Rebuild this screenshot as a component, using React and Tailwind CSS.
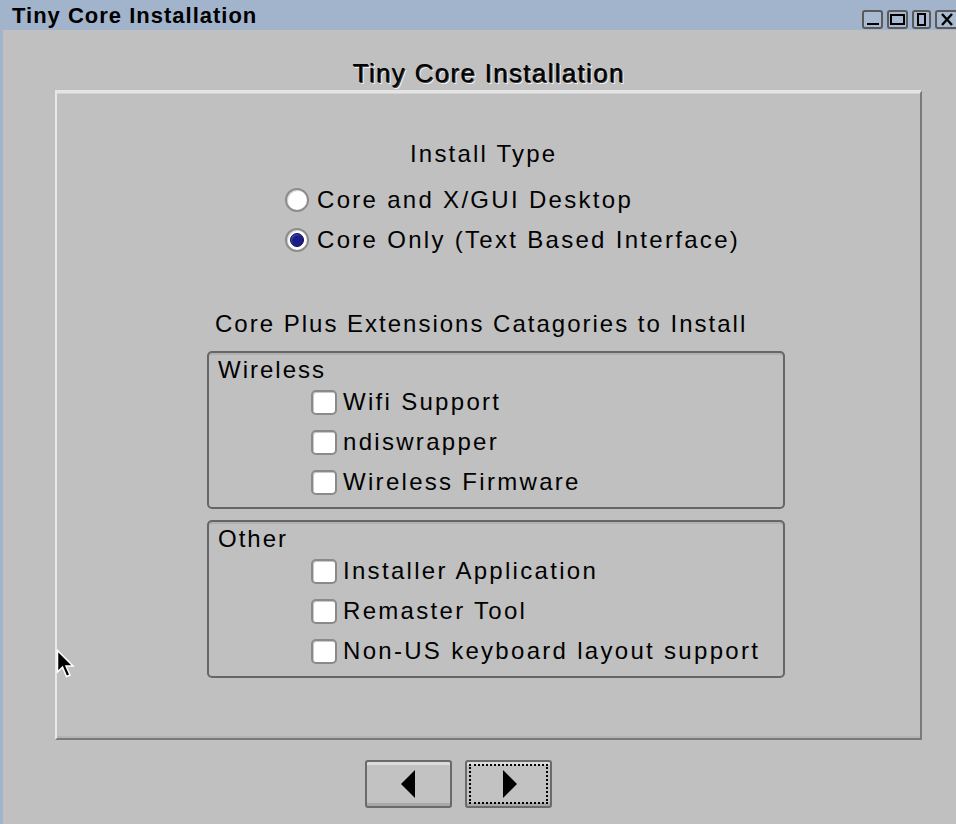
import React from "react";

const body = "font-['Liberation_Sans',Arial,sans-serif]";

function Radio({ checked, label }) {
  return (
    <div className="flex items-center h-[40px]">
      <div className="w-[24px] h-[24px] rounded-full border-2 border-[#8c8c8c] bg-white flex items-center justify-center shadow-[inset_1px_1px_0_#d8d8d8]">
        {checked && (
          <div className="w-[14px] h-[14px] rounded-full bg-[#1c1c86] border border-[#0e0e50] shadow-[inset_1px_1px_1px_#4a4ac0]" />
        )}
      </div>
      <span className="ml-[8px] text-[24px] leading-none tracking-[2.3px] text-black">{label}</span>
    </div>
  );
}

function Check({ label }) {
  return (
    <div className="flex items-center h-[40px] pl-[102px]">
      <div className="w-[26px] h-[25px] rounded-[5px] border-2 border-[#8a8a8a] bg-white shadow-[inset_1px_1px_0_#c8c8c8]" />
      <span className="ml-[6px] text-[24px] leading-none tracking-[2.3px] text-black">{label}</span>
    </div>
  );
}

function Group({ title, items }) {
  return (
    <div className="ml-[150px] w-[578px] h-[158px] border-2 border-[#666] rounded-[5px] pt-[3px] shadow-[inset_0_2px_0_#b0b0b0]">
      <div className="pl-[9px] h-[26px] text-[24px] leading-[28px] tracking-[2px] text-black">{title}</div>
      {items.map((it) => (
        <Check key={it} label={it} />
      ))}
    </div>
  );
}

function TitleButton({ w, children }) {
  return (
    <div className={`${w} h-[19px] shrink-0 rounded-[3px] border-2 border-[#5a5a5a] bg-[#a9bad0] flex items-center justify-center`}>
      {children}
    </div>
  );
}

export default function App() {
  return (
    <div className={`w-[956px] h-[824px] overflow-hidden bg-[#c0c0c0] flex flex-col relative ${body}`}>
      {/* title bar */}
      <div className="h-[30px] bg-[#a2b4cc] flex overflow-hidden">
        <span className="self-center ml-[12px] mt-[2px] text-[22px] font-bold tracking-[1px] text-black leading-none">Tiny Core Installation</span>
        <div className="ml-auto flex gap-[4px] self-end mb-[1px] mr-[-3px]">
          <TitleButton w="w-[21px]">
            <div className="w-[12px] h-[2px] bg-black mt-[9px]" />
          </TitleButton>
          <TitleButton w="w-[21px]">
            <div className="w-[15px] h-[11px] border-2 border-black" />
          </TitleButton>
          <TitleButton w="w-[19px]">
            <div className="w-[9px] h-[13px] border-2 border-black" />
          </TitleButton>
          <TitleButton w="w-[24px]">
            <svg width="14" height="13" viewBox="0 0 14 13">
              <path d="M2 1 L12 12 M12 1 L2 12" stroke="black" strokeWidth="2.4" />
            </svg>
          </TitleButton>
        </div>
      </div>

      <div className="flex-1 border-l-[3px] border-[#a2b4cc] flex flex-col">
        <div className="ml-[52px] w-[867px] mt-[27px] h-[33px] text-center text-[26px] leading-[33px] tracking-[1.3px] text-black [text-shadow:1px_1px_0_#3a3a3a,2px_2px_0_#f0f0f0]">
          Tiny Core Installation
        </div>

        {/* main panel */}
        <div className="ml-[52px] w-[867px] h-[650px] border-t-[3px] border-l-2 border-t-[#e4e4e4] border-l-[#e8e8e8] border-r-2 border-b-2 border-r-[#7a7a7a] border-b-[#7a7a7a] shadow-[inset_0_1px_0_#d4d4d4,inset_0_-2px_0_#b4b4b4] flex flex-col">
          <div className="mt-[46px] ml-[353px] h-[30px] text-[24px] leading-[30px] tracking-[2.2px] text-black">Install Type</div>
          <div className="mt-[11px] ml-[228px]">
            <Radio label="Core and X/GUI Desktop" />
            <Radio checked label="Core Only (Text Based Interface)" />
          </div>
          <div className="mt-[49px] ml-[158px] h-[30px] text-[24px] leading-[30px] tracking-[2px] text-black">
            Core Plus Extensions Catagories to Install
          </div>
          <div className="mt-[12px]">
            <Group title="Wireless" items={["Wifi Support", "ndiswrapper", "Wireless Firmware"]} />
          </div>
          <div className="mt-[11px]">
            <Group title="Other" items={["Installer Application", "Remaster Tool", "Non-US keyboard layout support"]} />
          </div>
        </div>

        {/* nav buttons */}
        <div className="mt-[20px] ml-[362px] flex gap-[13px]">
          <div className="w-[87px] h-[48px] rounded-[3px] border-2 border-[#6a6a6a] bg-[#c2c2c2] shadow-[inset_0_3px_0_#dcdcdc,inset_0_-3px_0_#a8a8a8] flex items-center justify-center">
            <svg width="16" height="28" viewBox="0 0 16 28">
              <path d="M14 0 L14 28 L0 14 Z" fill="black" />
            </svg>
          </div>
          <div className="w-[87px] h-[48px] rounded-[3px] border-2 border-[#6a6a6a] bg-[#c2c2c2] shadow-[inset_0_3px_0_#dcdcdc,inset_0_-3px_0_#a8a8a8] p-[2px]">
            <div className="w-full h-full border-2 border-dotted border-black flex items-center justify-center">
              <svg width="16" height="28" viewBox="0 0 16 28">
                <path d="M2 0 L2 28 L16 14 Z" fill="black" />
              </svg>
            </div>
          </div>
        </div>
      </div>

      {/* mouse cursor */}
      <svg className="absolute left-[56px] top-[649px]" width="22" height="32" viewBox="0 0 22 32">
        <path d="M1.5 1.5 L1.5 23 L6.5 18 L10.5 27.5 L14 26 L10 17 L17 17 Z" fill="black" stroke="white" strokeWidth="1.5" strokeLinejoin="miter" />
      </svg>
    </div>
  );
}
